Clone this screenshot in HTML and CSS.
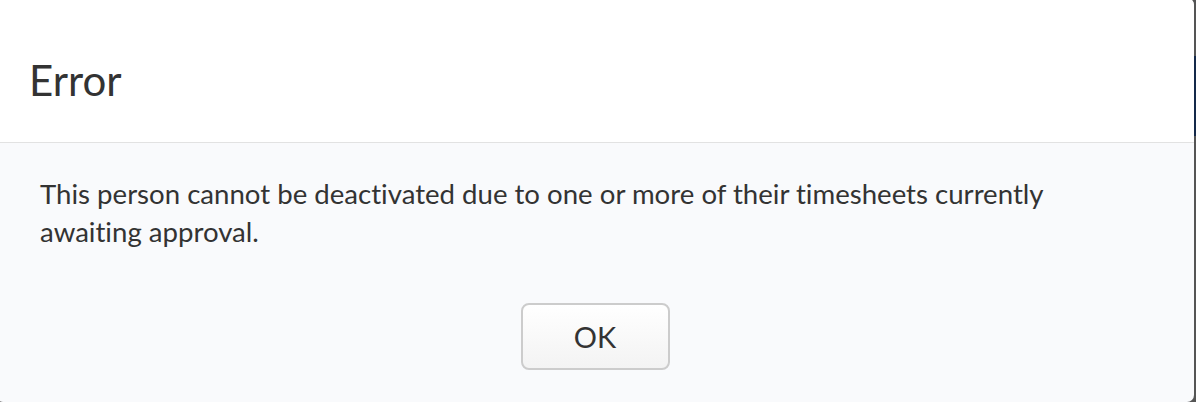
FILE: index.html
```html
<!DOCTYPE html>
<html lang="en">
<head>
    <meta charset="UTF-8">
    <title>Error</title>
    <link rel="stylesheet" href="styles.css">
</head>
<body>
    <div class="backdrop">
        <div class="app-bar"></div>
    </div>
    <div class="modal">
        <div class="modal-header">
            <h3 class="modal-title">Error</h3>
        </div>
        <div class="modal-body">
            <p>This person cannot be deactivated due to one or more of their timesheets currently awaiting approval.</p>
        </div>
        <div class="modal-footer">
            <button class="btn">OK</button>
        </div>
    </div>
</body>
</html>
```

FILE: styles.css
```css
body {
    margin: 0;
    height: 402px;
    overflow: hidden;
    background: #555555;
    font-family: Lato, "Open Sans", sans-serif;
    font-variant-ligatures: no-common-ligatures;
    color: #333333;
}
.backdrop {
    position: absolute;
    inset: 0;
}
.app-bar {
    margin-top: 56px;
    height: 80px;
    background: #14294a;
    border-bottom: 1px solid #555;
}
.modal {
    position: absolute;
    top: -2px;
    left: -4px;
    width: 1198px;
    height: 404px;
    border-radius: 7px;
    background: #f9fafc;
    overflow: hidden;
    display: flex;
    flex-direction: column;
}
.modal-header {
    background: #ffffff;
    border-bottom: 1px solid #e2e2e2;
    height: 145px;
    box-sizing: border-box;
    padding: 0 0 0 33px;
    display: flex;
    align-items: center;
}
.modal-title {
    margin: 0;
    padding-top: 20px;
    font-size: 42px;
    font-weight: 400;
    color: #333333;
}
.modal-body {
    padding: 32px 44px 0;
}
.modal-body p {
    margin: 0;
    font-size: 27.6px;
    line-height: 38px;
    color: #333333;
    max-width: 1060px;
}
.modal-footer {
    display: flex;
    justify-content: center;
    padding-top: 52px;
}
.btn {
    width: 149px;
    height: 67px;
    border: 2px solid #cccccc;
    border-radius: 8px;
    background: linear-gradient(#ffffff, #f3f3f3);
    font-family: Lato, sans-serif;
    font-size: 29px;
    color: #333333;
    cursor: pointer;
}
```
